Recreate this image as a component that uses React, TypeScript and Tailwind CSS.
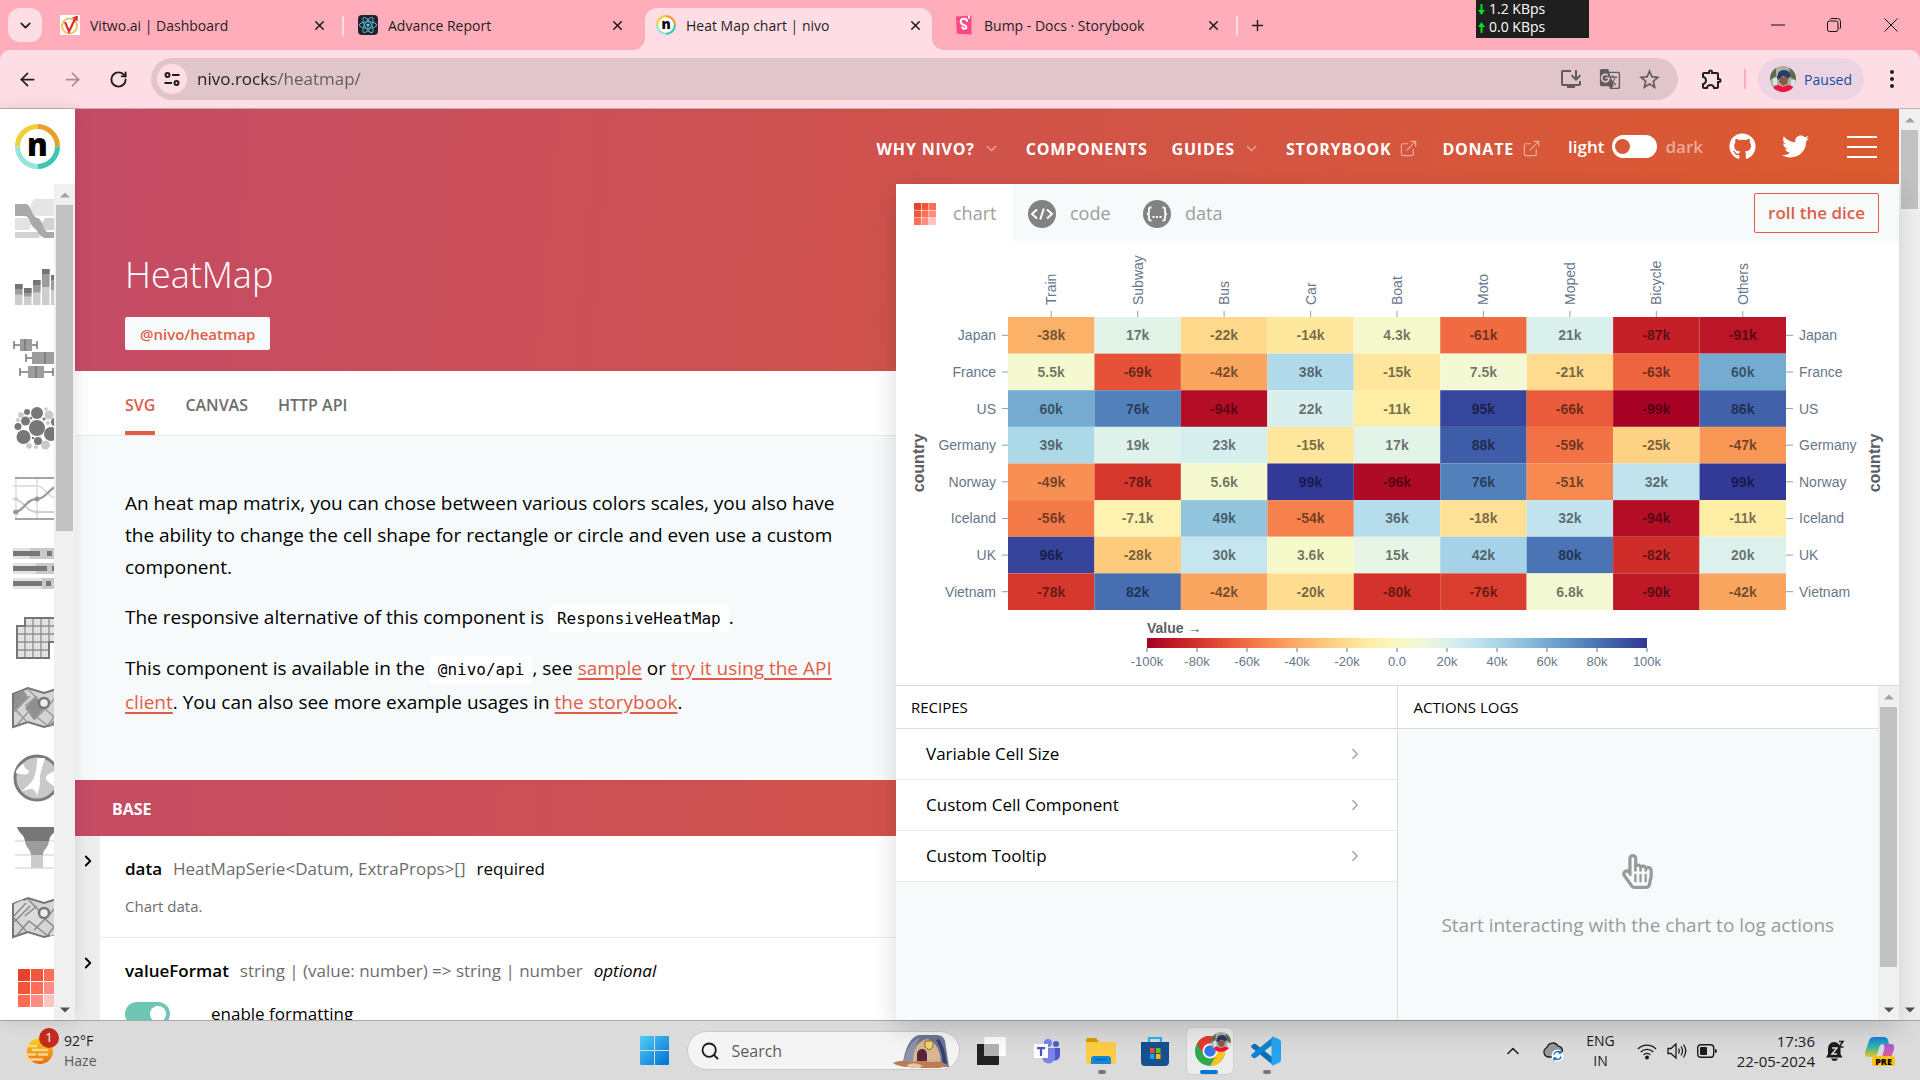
import { useState, type ReactNode } from "react";
import {
  ArrowLeft,
  ArrowRight,
  ChevronDown,
  ChevronRight,
  ChevronUp,
  Plus,
  RotateCw,
  Search,
  X,
} from "lucide-react";
import { FaGithub, FaReact, FaRegHandPointer, FaTwitter } from "react-icons/fa";
import { FiExternalLink } from "react-icons/fi";
import { MdGTranslate, MdInstallDesktop, MdOutlineExtension, MdStarBorder } from "react-icons/md";

const columns = ["Train", "Subway", "Bus", "Car", "Boat", "Moto", "Moped", "Bicycle", "Others"];

const series: { country: string; values: number[] }[] = [
  { country: "Japan", values: [-38, 17, -22, -14, 4.3, -61, 21, -87, -91] },
  { country: "France", values: [5.5, -69, -42, 38, -15, 7.5, -21, -63, 60] },
  { country: "US", values: [60, 76, -94, 22, -11, 95, -66, -99, 86] },
  { country: "Germany", values: [39, 19, 23, -15, 17, 88, -59, -25, -47] },
  { country: "Norway", values: [-49, -78, 5.6, 99, -96, 76, -51, 32, 99] },
  { country: "Iceland", values: [-56, -7.1, 49, -54, 36, -18, 32, -94, -11] },
  { country: "UK", values: [96, -28, 30, 3.6, 15, 42, 80, -82, 20] },
  { country: "Vietnam", values: [-78, 82, -42, -20, -80, -76, 6.8, -90, -42] },
];

const scheme = [
  [165, 0, 38],
  [215, 48, 39],
  [244, 109, 67],
  [253, 174, 97],
  [254, 224, 144],
  [255, 255, 191],
  [224, 243, 248],
  [171, 217, 233],
  [116, 173, 209],
  [69, 117, 180],
  [49, 54, 149],
];

// Cubic B-spline through the diverging scheme, t in 0..1.
function colorAt(t: number): string {
  const n = scheme.length - 1;
  const i = t >= 1 ? n - 1 : Math.floor(Math.max(0, t) * n);
  const u = t * n - i;
  const channel = (c: number) => {
    const v1 = scheme[i][c];
    const v2 = scheme[i + 1][c];
    const v0 = i > 0 ? scheme[i - 1][c] : 2 * v1 - v2;
    const v3 = i < n - 1 ? scheme[i + 2][c] : 2 * v2 - v1;
    const u2 = u * u;
    const u3 = u2 * u;
    const v =
      ((1 - 3 * u + 3 * u2 - u3) * v0 + (4 - 6 * u2 + 3 * u3) * v1 + (1 + 3 * u + 3 * u2 - 3 * u3) * v2 + u3 * v3) / 6;
    return Math.round(Math.min(255, Math.max(0, v)));
  };
  return `rgb(${channel(0)}, ${channel(1)}, ${channel(2)})`;
}

function HeatMapChart() {
  const left = 112;
  const top = 76;
  const width = 778;
  const height = 293;
  const cw = width / columns.length;
  const ch = height / series.length;
  const legendLeft = 251;
  const legendTicks = [-100, -80, -60, -40, -20, 0, 20, 40, 60, 80, 100];
  return (
    <svg viewBox="0 0 1003 444" className="block w-full" fontFamily="'Liberation Sans', Arial, sans-serif" role="img" aria-label="Heat map">
      <defs>
        <linearGradient id="legend">
          {Array.from({ length: 21 }, (_, i) => (
            <stop key={i} offset={i / 20} stopColor={colorAt(i / 20)} />
          ))}
        </linearGradient>
      </defs>
      {columns.map((c, i) => {
        const x = left + cw * (i + 0.5);
        return (
          <g key={c} fill="#67768a">
            <line x1={x} x2={x} y1={top - 6} y2={top} stroke="#8fa1ad" />
            <text transform={`translate(${x} ${top - 12}) rotate(-90)`} fontSize="14" dominantBaseline="central">
              {c}
            </text>
          </g>
        );
      })}
      {series.map((s, r) => {
        const y = top + ch * (r + 0.5);
        return (
          <g key={s.country}>
            <line x1={left - 6} x2={left} y1={y} y2={y} stroke="#8fa1ad" />
            <line x1={left + width} x2={left + width + 7} y1={y} y2={y} stroke="#8fa1ad" />
            <text x={left - 12} y={y} fontSize="14" fill="#67768a" textAnchor="end" dominantBaseline="central">
              {s.country}
            </text>
            <text x={left + width + 13} y={y} fontSize="14" fill="#67768a" dominantBaseline="central">
              {s.country}
            </text>
            {s.values.map((v, c) => (
              <g key={c}>
                <rect x={left + cw * c} y={top + ch * r} width={cw} height={ch} fill={colorAt((v + 100) / 200)} />
                <text
                  x={left + cw * (c + 0.5)}
                  y={y}
                  fontSize="14"
                  fontWeight="700"
                  fill="#000"
                  fillOpacity="0.54"
                  textAnchor="middle"
                  dominantBaseline="central"
                >
                  {v}k
                </text>
              </g>
            ))}
          </g>
        );
      })}
      <text transform="translate(22 222) rotate(-90)" fontSize="16" fontWeight="700" fill="#5c5f63" textAnchor="middle" dominantBaseline="central">
        country
      </text>
      <text transform="translate(978 222) rotate(-90)" fontSize="16" fontWeight="700" fill="#5c5f63" textAnchor="middle" dominantBaseline="central">
        country
      </text>
      <text x={legendLeft} y="387" fontSize="14" fontWeight="700" fill="#5c5f63" dominantBaseline="central">
        Value →
      </text>
      <rect x={legendLeft} y="397" width="500" height="10" fill="url(#legend)" />
      {legendTicks.map((t, i) => (
        <g key={t}>
          <line x1={legendLeft + i * 50} x2={legendLeft + i * 50} y1="407" y2="411" stroke="#667788" />
          <text x={legendLeft + i * 50} y="420" fontSize="13" fill="#67768a" textAnchor="middle" dominantBaseline="central">
            {t === 0 ? "0.0" : `${t}k`}
          </text>
        </g>
      ))}
    </svg>
  );
}

/* ---------- Browser chrome ---------- */

function NivoMark({ className }: { className: string }) {
  return (
    <svg viewBox="0 0 45 45" className={className} aria-hidden="true">
      <circle cx="22.5" cy="22.5" r="20" fill="#fff" />
      <g fill="none" strokeWidth="5">
        <path d="M2.500 22.500A20 20 0 0 1 22.500 2.500" stroke="#f1cf36" />
        <path d="M22.500 2.500A20 20 0 0 1 42.500 22.500" stroke="#e8a02c" />
        <path d="M42.500 22.500A20 20 0 0 1 22.500 42.500" stroke="#3dc8ad" />
        <path d="M22.500 42.500A20 20 0 0 1 2.500 22.500" stroke="#97e5d6" />
      </g>
      <text x="22.500" y="32" fontSize="31" fontWeight="800" textAnchor="middle" fontFamily="'Open Sans', sans-serif">
        n
      </text>
    </svg>
  );
}

function VitwoIcon() {
  return (
    <svg viewBox="0 0 20 20" className="size-5" aria-hidden="true">
      <rect width="20" height="20" fill="#fff" />
      <circle cx="9.500" cy="11" r="7.500" fill="none" stroke="#f0b545" strokeWidth="1.600" />
      <path d="M5 7l4 9.500L15 4" fill="none" stroke="#e0302c" strokeWidth="2.200" />
      <path d="M12 2.500L18 0.500l-.5 6z" fill="#e0302c" />
    </svg>
  );
}

function StorybookIcon() {
  return (
    <svg viewBox="0 0 20 20" className="size-5" aria-hidden="true">
      <path d="M2 1.500L17.500.5v19L2.800 18.800z" fill="#ff4785" />
      <path d="M14 .5l-.1 3.500 1.100-.8 1 .8V.4z" fill="#fff" />
      <path d="M13.200 6.800c0-2-1.300-3-3.200-3S6.700 5 6.700 6.800c0 3.800 5.600 2.700 5.600 5.300 0 1-.7 1.600-2 1.600-1.500 0-2-.8-2-2.200" fill="none" stroke="#fff" strokeWidth="2" />
    </svg>
  );
}

function ReactIcon() {
  return (
    <span className="flex size-5 items-center justify-center rounded-sm bg-[#20232a] text-[#5fd3f3]">
      <FaReact size={18} />
    </span>
  );
}

const tabs: { title: string; icon: ReactNode; active?: boolean; divider?: boolean }[] = [
  { title: "Vitwo.ai | Dashboard", icon: <VitwoIcon />, divider: true },
  { title: "Advance Report", icon: <ReactIcon /> },
  { title: "Heat Map chart | nivo", icon: <NivoMark className="size-5" />, active: true },
  { title: "Bump - Docs · Storybook", icon: <StorybookIcon />, divider: true },
];

function SpeedArrow({ dir }: { dir: "up" | "down" }) {
  return (
    <svg viewBox="0 0 7 11" className="h-[11px] w-[7px]" fill="#00e413" aria-hidden="true">
      <path d={dir === "down" ? "M2.500 0h2v6H7l-3.500 5L0 6h2.500z" : "M2.500 11h2V5H7L3.500 0 0 5h2.500z"} />
    </svg>
  );
}

function TabStrip() {
  return (
    <div className="relative flex h-[50px] items-end bg-[#ffacbb] text-[#1f1f1f]">
      <button aria-label="Search tabs" className="mb-2 ml-2 flex size-[34px] shrink-0 items-center justify-center rounded-xl bg-[#ffdde4]">
        <ChevronDown size={17} strokeWidth={2.500} />
      </button>
      <div role="tablist" className="ml-1 flex h-[42px] items-center">
        {tabs.map((t) => (
          <div
            key={t.title}
            role="tab"
            aria-selected={!!t.active}
            className="relative flex h-full w-[298px] items-center pr-3.5 pb-2 pl-3.5"
          >
            {t.active && (
              <span className="absolute inset-y-0 right-2 left-[3px] rounded-t-xl bg-[#ffdde4]">
                <span className="absolute bottom-0 -left-3 size-3 bg-[radial-gradient(circle_at_0_0,transparent_12px,#ffdde4_12px)]" />
                <span className="absolute -right-3 bottom-0 size-3 bg-[radial-gradient(circle_at_100%_0,transparent_12px,#ffdde4_12px)]" />
              </span>
            )}
            <span className="relative">{t.icon}</span>
            <span className="relative ml-2.5 flex-1 truncate text-[14px]">{t.title}</span>
            <button aria-label={`Close ${t.title}`} className="relative mr-px p-0.5">
              <X size={15} strokeWidth={2.500} />
            </button>
            {t.divider && <span className="absolute right-0 top-2 h-5 w-0.5 rounded bg-[#ffdde4]" />}
          </div>
        ))}
        <button aria-label="New tab" className="mb-2 ml-[7px] p-1">
          <Plus size={17} strokeWidth={2} />
        </button>
      </div>
      <div className="absolute top-0 right-[331px] h-[38px] w-[113px] bg-[#1f1f1f] pl-0.5 text-[14px] leading-[18px] text-white">
        <p className="flex items-center gap-1">
          <SpeedArrow dir="down" />
          1.2 KBps
        </p>
        <p className="flex items-center gap-1">
          <SpeedArrow dir="up" />
          0.0 KBps
        </p>
      </div>
      <div className="ml-auto flex h-full items-center">
        <button aria-label="Minimize" className="flex h-full w-14 items-center justify-center">
          <svg viewBox="0 0 14 14" className="size-3.5" aria-hidden="true">
            <path d="M0 7h14" stroke="#111" />
          </svg>
        </button>
        <button aria-label="Restore" className="flex h-full w-14 items-center justify-center">
          <svg viewBox="0 0 14 14" className="size-3.5" fill="none" stroke="#111" aria-hidden="true">
            <rect x=".5" y="3" width="10.500" height="10.500" rx="2" />
            <path d="M3 1.500Q3.500.5 5 .5h5.500a3 3 0 0 1 3 3V9q0 1.500-1 2" />
          </svg>
        </button>
        <button aria-label="Close" className="flex h-full w-[58px] items-center justify-center">
          <svg viewBox="0 0 14 14" className="size-3.5" stroke="#111" aria-hidden="true">
            <path d="M.5.5l13 13M13.500.5l-13 13" />
          </svg>
        </button>
      </div>
    </div>
  );
}

function Toolbar() {
  return (
    <div className="bg-[#ffacbb]">
      <div className="flex h-[59px] items-center rounded-t-[10px] border-b border-[#bfb0b4] bg-[#ffdde4] text-[#1f1f1f]">
        <button aria-label="Back" className="ml-[17px]">
          <ArrowLeft size={21} />
        </button>
        <button aria-label="Forward" className="ml-6 text-[#a78f95]">
          <ArrowRight size={21} />
        </button>
        <button aria-label="Reload" className="ml-[26px]">
          <RotateCw size={19} strokeWidth={2.400} />
        </button>
        <div className="ml-[23px] flex h-[42px] flex-1 items-center rounded-full bg-[#e0c5ca] pr-4 pl-1.5 text-[#5f5b5f]">
          <button aria-label="Site information" className="flex size-[30px] items-center justify-center rounded-full bg-[#ffdde4]">
            <svg viewBox="0 0 16 16" className="size-4" fill="none" stroke="#1f1f1f" strokeWidth="2" aria-hidden="true">
              <circle cx="3.500" cy="4" r="2" />
              <path d="M8 4h7.500M.5 12H8" />
              <circle cx="12.500" cy="12" r="2" />
            </svg>
          </button>
          <input
            aria-label="Address"
            defaultValue="nivo.rocks/heatmap/"
            className="ml-2.5 flex-1 bg-[linear-gradient(90deg,#1f1f1f_77px,#5f5b5f_77px)] bg-clip-text text-[17px] text-transparent caret-black outline-none"
          />
          <button aria-label="Install" className="ml-4">
            <MdInstallDesktop size={24} />
          </button>
          <button aria-label="Translate" className="ml-4">
            <MdGTranslate size={22} />
          </button>
          <button aria-label="Bookmark" className="ml-4">
            <MdStarBorder size={25} />
          </button>
        </div>
        <button aria-label="Extensions" className="ml-[22px]">
          <MdOutlineExtension size={24} />
        </button>
        <span className="ml-5 h-5 w-0.5 bg-[#ffacbb]" />
        <button className="ml-3 flex h-[42px] items-center gap-2 rounded-full bg-[#ecd4e2] pr-3 pl-3 text-[14px] text-[#174ea6]">
          <Avatar className="size-[26px]" />
          Paused
        </button>
        <button aria-label="Menu" className="mr-[22px] ml-[22px]">
          <svg viewBox="0 0 12 20" className="h-5 w-3" fill="#1f1f1f" aria-hidden="true">
            <circle cx="6" cy="3" r="2" />
            <circle cx="6" cy="10" r="2" />
            <circle cx="6" cy="17" r="2" />
          </svg>
        </button>
      </div>
    </div>
  );
}

function Avatar({ className }: { className: string }) {
  return (
    <svg viewBox="0 0 26 26" className={className} aria-hidden="true">
      <clipPath id="face">
        <circle cx="13" cy="13" r="13" />
      </clipPath>
      <g clipPath="url(#face)">
        <rect width="26" height="26" fill="#a9b3a0" />
        <path d="M0 4l6-4v10l-6 4zM19 2l7 3v9l-5-2z" fill="#5c6b52" />
        <path d="M3 12h4v7H3zM21 14h4v6h-4z" fill="#dfe3e6" />
        <path d="M10 11h9l-2 7-4 2-4-4z" fill="#8c5a45" />
        <path d="M7 11q1-7 7-7t7 6l-2 2-6-2-5 4z" fill="#2b3c66" />
        <path d="M2 26q0-6 6-7l5 2 5-2q7 1 8 7z" fill="#f5103f" />
      </g>
    </svg>
  );
}

/* ---------- Site sidebar ---------- */

const heatShades = ["#e8432a", "#f2553c", "#ff6d54", "#f2553c", "#ff6d54", "#ff8c80", "#ff6d54", "#ff8c80", "#ffc5c5"];

function HeatIcon({ className }: { className: string }) {
  return (
    <svg viewBox="0 0 38 38" className={className} aria-hidden="true">
      {heatShades.map((c, i) => (
        <rect key={i} x={(i % 3) * 13} y={Math.floor(i / 3) * 13} width="12" height="12" fill={c} />
      ))}
    </svg>
  );
}

function MapIcon({ light }: { light?: boolean }) {
  const dark = light ? "#dcdcdc" : "#8f8f8f";
  const stroke = light ? "#8a8a8a" : "#9a9a9a";
  return (
    <>
      <path d="M1 10L16 4l16 5 16-5v35l-16 4-16-5L1 43z" fill="#d5d5d5" stroke="#767676" strokeWidth="2" />
      <path d="M2 10l9-4 5 7L2 27zM13 24L24 12l8 12-10 12zM38 40l10-9v8l-10 3z" fill={dark} />
      <path d="M2 22L14 9M2 28L18 12M16 5l16 17M48 8L38 20M2 24l13 14M5 41l12-14 18 14M13 22L25 12M22 36l11-11 14 12M48 25L36 41" fill="none" stroke={stroke} strokeWidth="1.500" />
      <circle cx="32" cy="19" r="5" fill="#eee" stroke="#767676" strokeWidth="2.500" />
    </>
  );
}

const chartIcons: { name: string; art: ReactNode }[] = [
  {
    name: "AreaBump",
    art: (
      <>
        <path d="M17 22Q19 5 23 5H50V22z" fill="#e5e5e5" />
        <path d="M3 24h14q5 4 0 12H3z" fill="#e3e3e3" />
        <path d="M3 38h22l8-14h17v12H34l-8 8H3z" fill="#d2d2d2" />
        <path d="M3 10h11c5 0 6 14 12 14 5 2 5 14 10 14h14v6H34c-6 0-8-8-12-10-4-3-4-12-9-12H3z" fill="#a9a9a9" />
      </>
    ),
  },
  {
    name: "Bar",
    art: [20, 24, 16, 5, 11].map((y, i) => (
      <g key={i}>
        <rect x={3 + i * 9} y={y} width="7.500" height={41 - y} fill="#cdcdcd" />
        <rect x={3 + i * 9} y={y} width="7.500" height={(41 - y) * 0.5} fill="#9c9c9c" />
        <rect x={3 + i * 9} y={y} width="7.500" height="5" fill="#757575" />
      </g>
    )),
  },
  {
    name: "BoxPlot",
    art: (
      <g stroke="#777" strokeWidth="1.500">
        <path d="M2 11h23M2 7v8M25 7v8M14 24h34M14 20v8M8 38h33M8 34v8M41 34v8" />
        <path d="M8 5h12v12H8zM20 18h24v12H20zM16 32h16v12H16z" fill="#9d9d9d" stroke="none" />
        <path d="M13 5v12M33 18v12M24 32v12" />
      </g>
    ),
  },
  {
    name: "CirclePacking",
    art: (
      <>
        <g fill="#777">
          <circle cx="25" cy="24" r="8" />
          <circle cx="25" cy="9" r="6" />
          <circle cx="11.500" cy="33" r="7" />
          <circle cx="39" cy="30" r="7" />
          <circle cx="13.500" cy="17" r="4.500" />
          <circle cx="6" cy="22.500" r="3.500" />
          <circle cx="15" cy="8" r="3" />
          <circle cx="26" cy="37" r="4" />
          <circle cx="43" cy="18" r="4" />
          <circle cx="32" cy="15" r="1.500" />
          <circle cx="19" cy="14" r="1.300" />
          <circle cx="21" cy="34" r="1.300" />
        </g>
        <g fill="#c9c9c9">
          <circle cx="37" cy="11" r="4.500" />
          <circle cx="33.500" cy="41" r="4.500" />
          <circle cx="9" cy="11" r="2.800" />
          <circle cx="6" cy="16" r="2" />
          <circle cx="17" cy="42" r="2.800" />
          <circle cx="24" cy="43" r="2" />
          <circle cx="34" cy="5" r="1.800" />
          <circle cx="36" cy="19" r="2" />
        </g>
      </>
    ),
  },
  {
    name: "Bump",
    art: (
      <g fill="none">
        <path d="M4 4v41M25 4v41" stroke="#ddd" strokeWidth="1.500" />
        <path d="M1 12h24c9 0 10 13 23 13" stroke="#e0e0e0" strokeWidth="2" />
        <path d="M1 25c11 0 12 13 24 13h23" stroke="#cfcfcf" strokeWidth="2" />
        <path d="M1 38c12 0 12-13 24-13 10 0 12-13 23-13" stroke="#999" strokeWidth="2.200" />
        <path d="M3 4h45M3 45h45" stroke="#888" strokeWidth="1.600" />
        <g fill="#999">
          <circle cx="4" cy="38" r="2.500" />
          <circle cx="25" cy="25" r="2.500" />
          <circle cx="4" cy="25" r="2" fill="#cfcfcf" />
          <circle cx="25" cy="38" r="2" fill="#cfcfcf" />
        </g>
      </g>
    ),
  },
  {
    name: "Bullet",
    art: [4, 19, 34].map((y, i) => (
      <g key={y}>
        <rect x="1" y={y} width="48" height="11" fill="#e2e2e2" />
        <rect x={18 + i * 6} y={y} width="32" height="11" fill="#c9c9c9" />
        <rect x="1" y={y + 3} width={[27, 34, 29][i]} height="5" fill="#777" />
        <rect x={[35, 40, 34][i]} y={y + 3} width="5" height="5" fill="#777" />
      </g>
    )),
  },
  {
    name: "Calendar",
    art: (
      <>
        <path d="M5 12h8V4h32v24h-8v16H5z" fill="#e2e2e2" />
        <path d="M5 20h40M5 28h32M5 36h32M13 12h32M13 12v32M21 4v40M29 4v40M37 4v24" stroke="#8e8e8e" strokeWidth="1.300" />
        <path d="M5 12h8V4h32v24h-8v16H5z" fill="none" stroke="#777" strokeWidth="2" />
      </>
    ),
  },
  { name: "Choropleth", art: <MapIcon /> },
  {
    name: "Chord",
    art: (
      <>
        <circle cx="25" cy="24" r="22" fill="#c9c9c9" stroke="#7b7b7b" strokeWidth="3" />
        <path d="M25 4h8c-3 10-6 18-5 24 0 6-2 9-3 14-2-5-2-7-6-7-4 0-8 2-10 3 5-5 11-9 13-14 2-6 3-12 3-20z" fill="#fff" />
        <path d="M4 17c3-4 5-7 8-7 0 6 5 5 5 8-1 4-9 2-13 1zM46 16c-6 2-12 4-12 8s6 6 10 10z" fill="#fff" />
      </>
    ),
  },
  {
    name: "Funnel",
    art: (
      <>
        <path d="M3 17h44M3 31h44M3 44h44" stroke="#dedede" strokeWidth="1.500" />
        <path d="M5 3h40c-2 7-7 7-8 14H13C12 10 7 10 5 3z" fill="#777" />
        <path d="M13 17h24c-1 8-6 8-6 14H19c0-6-5-6-6-14z" fill="#9c9c9c" />
        <path d="M19 31h12v13H19z" fill="#cbcbcb" />
      </>
    ),
  },
  { name: "GeoMap", art: <MapIcon light /> },
];

function Arrow({ dir, dim }: { dir: "up" | "down"; dim?: boolean }) {
  return (
    <svg viewBox="0 0 10 6" className="h-1.5 w-2.5" fill={dim ? "#a3a3a3" : "#505050"} aria-hidden="true">
      <path d={dir === "up" ? "M0 5.500L5 .5l5 5z" : "M0 .5h10l-5 5z"} />
    </svg>
  );
}

function ScrollRail({ thumb }: { thumb: string }) {
  return (
    <div className="flex w-[21px] shrink-0 flex-col items-center bg-[#f0f0f0]">
      <span className="flex h-[21px] shrink-0 items-center">
        <Arrow dir="up" dim />
      </span>
      <span className="flex w-full flex-1 justify-center">
        <span className={`w-[17px] bg-[#c1c1c1] ${thumb}`} />
      </span>
      <span className="flex h-[21px] shrink-0 items-center">
        <Arrow dir="down" />
      </span>
    </div>
  );
}

function Sidebar() {
  return (
    <aside className="z-10 flex w-[75px] shrink-0 flex-col bg-white shadow-[0_0_16px_rgba(0,0,0,0.12)]">
      <a href="#home" aria-label="nivo home" className="flex h-[75px] shrink-0 items-center justify-center">
        <NivoMark className="size-[45px]" />
      </a>
      <div className="flex min-h-0 flex-1">
        <nav aria-label="Charts" className="min-w-0 flex-1 overflow-hidden">
          {chartIcons.map((icon) => (
            <a key={icon.name} href={`#${icon.name}`} aria-label={icon.name} className="flex h-[70px] items-center pl-3">
              <svg viewBox="0 0 50 50" className="size-[50px] shrink-0" aria-hidden="true">
                {icon.art}
              </svg>
            </a>
          ))}
          <a href="#HeatMap" aria-label="HeatMap" className="flex h-[68px] items-center pl-[18px]">
            <HeatIcon className="size-[38px] shrink-0" />
          </a>
        </nav>
        <ScrollRail thumb="h-[41%]" />
      </div>
    </aside>
  );
}

/* ---------- Site content ---------- */

function NavBar() {
  return (
    <header className="flex h-[75px] shrink-0 items-center justify-end pr-[22px] text-white">
      <nav className="flex items-center pt-1 text-[16px] font-bold tracking-wider">
        <button className="flex items-center">
          WHY NIVO?
          <ChevronDown size={17} strokeWidth={1.500} className="ml-2 opacity-60" />
        </button>
        <a href="#components" className="ml-[26px]">COMPONENTS</a>
        <button className="ml-6 flex items-center">
          GUIDES
          <ChevronDown size={17} strokeWidth={1.500} className="ml-2 opacity-60" />
        </button>
        <a href="#storybook" className="ml-[26px] flex items-center">
          STORYBOOK
          <FiExternalLink size={19} strokeWidth={1.500} className="ml-2 opacity-50" />
        </a>
        <a href="#donate" className="ml-6 flex items-center">
          DONATE
          <FiExternalLink size={19} strokeWidth={1.500} className="ml-2 opacity-50" />
        </a>
      </nav>
      <label className="ml-[27px] flex items-center gap-2 text-[17px] font-semibold">
        light
        <input
          type="checkbox"
          className="relative h-[23px] w-[45px] appearance-none rounded-full bg-white before:absolute before:top-1 before:left-[3px] before:size-[15px] before:rounded-full before:bg-[#d9583a] checked:before:left-[27px]"
        />
        <span className="opacity-50">dark</span>
      </label>
      <a href="#github" aria-label="GitHub" className="ml-[26px]">
        <FaGithub size={27} />
      </a>
      <a href="#twitter" aria-label="Twitter" className="ml-[26px]">
        <FaTwitter size={27} />
      </a>
      <button aria-label="Open menu" className="ml-[38px] flex flex-col gap-2">
        <span className="h-0.5 w-[30px] bg-white" />
        <span className="h-0.5 w-[30px] bg-white" />
        <span className="h-0.5 w-[30px] bg-white" />
      </button>
    </header>
  );
}

const linkClass = "text-[#e25d47] underline decoration-2 underline-offset-3";

function Code({ children }: { children: ReactNode }) {
  return <code className="rounded-xs bg-white px-2 py-1 font-['DejaVu_Sans_Mono',monospace] text-[16px] leading-none">{children}</code>;
}

function Description() {
  return (
    <section className="flex h-[344px] shrink-0 flex-col gap-[18px] bg-[#f6fafb] pr-[40px] pl-[50px] pt-[51px] text-[19px] leading-8 text-black">
      <p>
        An heat map matrix, you can chose between various colors scales, you also have the ability to change the cell
        shape for rectangle or circle and even use a custom component.
      </p>
      <p>
        The responsive alternative of this component is <Code>ResponsiveHeatMap</Code>.
      </p>
      <p className="leading-[34px]">
        This component is available in the <Code>@nivo/api</Code>, see{" "}
        <a href="#sample" className={linkClass}>sample</a> or{" "}
        <a href="#api" className={linkClass}>try it using the API client</a>. You can also see more example usages in{" "}
        <a href="#stories" className={linkClass}>the storybook</a>.
      </p>
    </section>
  );
}

function PropRow({ name, type, flag, children }: { name: string; type: string; flag: ReactNode; children: ReactNode }) {
  return (
    <div className="flex shrink-0">
      <button aria-label={`Expand ${name}`} className="flex w-[25px] shrink-0 items-start justify-center bg-[#ededed] pt-4">
        <ChevronRight size={18} strokeWidth={2.500} />
      </button>
      <div className="flex-1 border-b border-[#e9e9e9] bg-white px-[25px] pt-4 pb-4">
        <h3 className="flex gap-[11px] text-[17px] leading-[34px]">
          <span className="font-semibold">{name}</span>
          <span className="text-[#6d6d6d]">{type}</span>
          {flag}
        </h3>
        {children}
      </div>
    </div>
  );
}

function LeftColumn() {
  const [enabled, setEnabled] = useState(true);
  return (
    <div className="flex min-w-0 flex-[821] flex-col overflow-hidden">
      <div className="flex h-[187px] shrink-0 flex-col items-start px-[50px] pt-[64px]">
        <h1 className="text-[36px] leading-[54px] font-light text-white">HeatMap</h1>
        <a href="#package" className="mt-[15px] flex h-[33px] items-center rounded-xs bg-[#f6fafb] px-[15px] pt-0.5 text-[15px] font-semibold text-[#e25d47]">
          @nivo/heatmap
        </a>
      </div>
      <nav className="flex h-[65px] shrink-0 items-stretch gap-[30px] border-b border-[#e9e9e9] bg-white px-[50px] text-[16px] font-semibold text-[#6d6d6d]">
        <a href="#svg" className="flex items-center border-b-4 border-[#e25d47] pt-2 text-[#e25d47]">SVG</a>
        <a href="#canvas" className="flex items-center pt-1">CANVAS</a>
        <a href="#http" className="flex items-center pt-1">HTTP API</a>
      </nav>
      <Description />
      <h2 className="flex h-14 shrink-0 items-center px-[37px] pt-0.5 text-[16px] font-bold text-white">BASE</h2>
      <PropRow name="data" type="HeatMapSerie<Datum, ExtraProps>[]" flag={<span>required</span>}>
        <p className="mt-1.5 text-[15px] leading-[29px] text-[#6d6d6d]">Chart data.</p>
      </PropRow>
      <PropRow name="valueFormat" type="string | (value: number) => string | number" flag={<em>optional</em>}>
        <label className="mt-3.5 flex items-center gap-[41px] text-[17px] leading-6">
          <input
            type="checkbox"
            checked={enabled}
            onChange={(e) => setEnabled(e.target.checked)}
            className="relative h-6 w-[45px] appearance-none rounded-full bg-[#c4c4c4] before:absolute before:top-1 before:left-1 before:size-4 before:rounded-full before:bg-white checked:bg-[#6ec6b5] checked:before:left-[25px]"
          />
          enable formatting
        </label>
      </PropRow>
    </div>
  );
}

const recipes = ["Variable Cell Size", "Custom Cell Component", "Custom Tooltip"];

function RightColumn() {
  return (
    <div className="z-10 flex min-w-0 flex-[1003] flex-col bg-white shadow-[0_9px_24px_rgba(0,0,0,0.15)]">
      <div className="flex h-[57px] shrink-0 items-stretch bg-[#f6fafb] text-[18px] text-[#9e9e9e]">
        <button className="flex w-[117px] items-center gap-[17px] bg-white pt-0.5 pl-[18px]">
          <HeatIcon className="size-[22px]" />
          chart
        </button>
        <button className="flex w-[116px] items-center gap-3.5 pt-0.5 pl-[15px]">
          <svg viewBox="0 0 28 28" className="size-7" aria-hidden="true">
            <circle cx="14" cy="14" r="14" fill="#828282" />
            <path d="M9 9.500L4 14l5 4.500M19 9.500l5 4.500-5 4.500M15.800 8.500L12.200 19.500" fill="none" stroke="#fff" strokeWidth="2" />
          </svg>
          code
        </button>
        <button className="flex items-center gap-3.5 pt-0.5 pl-3.5">
          <svg viewBox="0 0 28 28" className="size-7" aria-hidden="true">
            <circle cx="14" cy="14" r="14" fill="#828282" />
            <path d="M8.500 7.500H7.500q-1.500 0-1.500 1.500v3q0 2-2 2 2 0 2 2v3q0 1.500 1.500 1.500h1M19.500 7.500h1q1.500 0 1.500 1.500v3q0 2 2 2-2 0-2 2v3q0 1.500-1.500 1.500h-1" fill="none" stroke="#fff" strokeWidth="1.800" />
            <path d="M9.500 16h2v2h-2zM13 16h2v2h-2zM16.500 16h2v2h-2z" fill="#fff" />
          </svg>
          data
        </button>
        <button className="mt-[9px] mr-5 ml-auto h-10 rounded-xs border border-[#e25d47] px-[13px] text-[17px] font-semibold text-[#e25d47]">
          roll the dice
        </button>
      </div>
      <HeatMapChart />
      <div className="flex min-h-0 flex-1 border-t border-[#dcdcdc] bg-[#f6fafb]">
        <section className="w-1/2 border-r border-[#dcdcdc]">
          <h2 className="h-[43px] border-b border-[#dcdcdc] bg-white pl-[15px] text-[15px] leading-[42px] font-medium">RECIPES</h2>
          {recipes.map((r) => (
            <a key={r} href="#recipe" className="flex h-[51px] items-center justify-between border-b border-[#ebebeb] bg-white pr-[33px] pl-[30px] text-[17px] font-medium">
              {r}
              <ChevronRight size={18} strokeWidth={1.500} className="text-[#999]" />
            </a>
          ))}
        </section>
        <section className="flex flex-1 flex-col">
          <h2 className="h-[43px] border-b border-[#dcdcdc] bg-white pl-4 text-[15px] leading-[42px] font-medium">ACTIONS LOGS</h2>
          <div className="flex flex-1 flex-col items-center justify-center gap-[22px] pt-11 text-[19px] text-[#9a9a9a]">
            <FaRegHandPointer size={35} />
            <p>Start interacting with the chart to log actions</p>
          </div>
        </section>
        <ScrollRail thumb="h-[89%]" />
      </div>
    </div>
  );
}

/* ---------- Taskbar ---------- */

function TaskbarIcons() {
  return (
    <>
      <button aria-label="Task view" className="ml-4">
        <svg viewBox="0 0 30 30" className="size-[30px]" aria-hidden="true">
          <path d="M9 1h20a1 1 0 0 1 1 1v18H9z" fill="#f7f7f7" />
          <path d="M1 8h22v20a1 1 0 0 1-1 1H1z" fill="#222" />
          <path d="M8 1h21v19H8z" fill="#fff" fillOpacity=".65" />
        </svg>
      </button>
      <button aria-label="Teams" className="ml-[27px]">
        <svg viewBox="0 0 28 26" className="h-[26px] w-7" aria-hidden="true">
          <circle cx="15" cy="5" r="4" fill="#7b83eb" />
          <circle cx="23" cy="6" r="3" fill="#5059c9" />
          <path d="M19 10h8v8a5 5 0 0 1-7 4z" fill="#5059c9" />
          <path d="M9 10h13v9a6.500 6.500 0 0 1-13 0z" fill="#7b83eb" />
          <path d="M1 6h14v14H1z" fill="#fff" />
          <path d="M4 9h8v2.200H9.100V18H6.900v-6.800H4z" fill="#4b53bc" />
        </svg>
      </button>
      <button aria-label="File Explorer" className="relative ml-[25px] flex h-full items-center">
        <svg viewBox="0 0 30 28" className="h-7 w-[30px]" aria-hidden="true">
          <path d="M0 3q0-2 2-2h8l3 4H0z" fill="#d99a00" />
          <path d="M0 5h28q2 0 2 2v18q0 2-2 2H2q-2 0-2-2z" fill="#ffcd43" />
          <path d="M5 27v-5q0-3 3-3h14q3 0 3 3v5z" fill="#1588d8" />
          <path d="M9 22.500h12" stroke="#0d5ea8" strokeWidth="1.500" />
        </svg>
        <span className="absolute bottom-1.5 left-3 h-1 w-2 rounded-full bg-[#777]" />
      </button>
      <button aria-label="Store" className="ml-6">
        <svg viewBox="0 0 30 30" className="size-[30px]" aria-hidden="true">
          <path d="M9 7V2h12v5" fill="none" stroke="#28b1ec" strokeWidth="2.200" />
          <path d="M1 6h28v20q0 4-4 4H5q-4 0-4-4z" fill="#15508f" />
          <path d="M10 12h4.500v5H10z" fill="#f25022" />
          <path d="M16 12h4.500v5H16z" fill="#7fba00" />
          <path d="M10 18h4.500v5H10z" fill="#00a4ef" />
          <path d="M16 18h4.500v5H16z" fill="#ffb900" />
        </svg>
      </button>
      <button aria-label="Chrome" className="relative ml-4 flex h-12 w-12 items-center rounded-md border border-[#cfcfcf] bg-[#ececec] pl-2">
        <svg viewBox="0 0 30 30" className="size-[30px]" aria-hidden="true">
          <circle cx="15" cy="15" r="15" fill="#2da94f" />
          <path d="M28 7.500A15 15 0 0 1 15 30l6.500-11.500L15 7.500z" fill="#fcc31e" />
          <path d="M2 7.500A15 15 0 0 1 28 7.500H15L8.500 18.500z" fill="#e33b2e" />
          <circle cx="15" cy="15" r="7.500" fill="#fff" />
          <circle cx="15" cy="15" r="5.800" fill="#3277e8" />
        </svg>
        <span className="absolute top-1 right-0.5">
          <Avatar className="size-5" />
        </span>
        <span className="absolute bottom-0 left-[13px] h-1 w-[18px] rounded-full bg-[#0078d4]" />
      </button>
      <button aria-label="Visual Studio Code" className="relative ml-[17px] flex h-full items-center">
        <svg viewBox="0 0 30 30" className="size-[30px]" aria-hidden="true">
          <path d="M0 10l2.500-2q1-.7 2 0L22 21.500V29L1 12q-1-1-1-2z" fill="#0a6fb8" />
          <path d="M0 20l2.500 2q1 .7 2 0L22 8.500V1L1 18q-1 1-1 2z" fill="#0f83cf" />
          <path d="M22 .5l6.500 3Q30 4.200 30 6v18q0 1.800-1.500 2.500L22 29.500q-1.500 0-1.500-2V2.500Q20.500.5 22 .5z" fill="#27a3ee" />
        </svg>
        <span className="absolute bottom-1.5 left-3 h-1 w-2 rounded-full bg-[#777]" />
      </button>
    </>
  );
}

function Taskbar() {
  return (
    <footer className="flex h-[60px] shrink-0 items-center border-t border-[#a9a9a9] bg-[#dbdbdb] text-[14px] text-[#1b1b1b]">
      <div className="flex flex-[640] items-center">
        <button className="ml-[25px] flex items-center gap-[9px] text-left">
          <span className="relative block">
            <svg viewBox="0 0 30 30" className="size-[30px]" aria-hidden="true">
              <defs>
                <linearGradient id="sun" x2="0" y2="1">
                  <stop stopColor="#ffd21f" />
                  <stop offset="1" stopColor="#ea6a10" />
                </linearGradient>
              </defs>
              <circle cx="15" cy="15" r="13" fill="url(#sun)" />
              <path d="M2 10h9M8 14h14M0 18.500h10M14 18.500h8M1 23.500h16" stroke="#f6d98c" strokeWidth="2.500" strokeLinecap="round" />
            </svg>
            <span className="absolute -top-2 -right-1 flex size-5 items-center justify-center rounded-full bg-[#c42b1c] text-[13px] text-white">1</span>
          </span>
          <span className="block leading-5">
            92°F
            <span className="block text-[#5a5a5a]">Haze</span>
          </span>
        </button>
      </div>
      <div className="flex h-full items-center">
        <button aria-label="Start">
          <svg viewBox="0 0 29 29" className="size-[29px]" aria-hidden="true">
            <defs>
              <linearGradient id="win" x2="1" y2="1">
                <stop stopColor="#52cdf8" />
                <stop offset="1" stopColor="#0070d0" />
              </linearGradient>
            </defs>
            <path d="M0 1q0-1 1-1h13v14H0zM15 0h13q1 0 1 1v13H15zM0 15h14v14H1q-1 0-1-1zM15 15h14v13q0 1-1 1H15z" fill="url(#win)" />
          </svg>
        </button>
        <label className="ml-[18px] flex h-[39px] w-[273px] items-center rounded-full border border-[#c9c9c9] bg-[#f4f4f4] pr-2 pl-3">
          <Search size={20} strokeWidth={2.200} />
          <input aria-label="Search" placeholder="Search" className="ml-3 min-w-0 flex-1 bg-transparent text-[16px] outline-none placeholder:text-[#5d5d5d]" />
          <svg viewBox="0 0 58 34" className="h-[34px] w-[58px] shrink-0" aria-hidden="true">
            <path d="M10 28Q14 4 26 1h18q6 0 8 6l4 26H18z" fill="#6f7590" />
            <path d="M10 28Q15 8 27 3q-6 10-6 26z" fill="#8d93a8" />
            <path d="M20 29Q20 8 34 5q13 4 14 24z" fill="#d8b692" />
            <path d="M46 5q6 8 8 26h-4q-1-16-7-25z" fill="#34407a" />
            <path d="M24 27v-7q1-5 5-5t5 5v7z" fill="#5a2438" />
            <path d="M32 7h8v6l-4 3-4-3z" fill="#f3d36d" stroke="#8a6a38" />
            <path d="M0 29q8-4 18-1 10-2 20 0 12-2 17 4l-9 2H28q-8-3-14-1Q4 32 0 29z" fill="#bd7b55" />
            <path d="M14 31q8-4 16 1l-4 2H16z" fill="#e9c3a3" />
          </svg>
        </label>
        <TaskbarIcons />
      </div>
      <div className="flex flex-[640] items-center justify-end">
        <button aria-label="Hidden icons">
          <ChevronUp size={20} strokeWidth={1.800} />
        </button>
        <svg viewBox="0 0 22 22" className="ml-[19px] size-[22px]" aria-hidden="true">
          <path d="M6 17a5 5 0 0 1-1-9.500A6 6 0 0 1 16 6q4.500 1 4.500 5t-3 6z" fill="#999" stroke="#222" strokeWidth="1.300" />
          <circle cx="15.500" cy="15.500" r="6" fill="#fff" />
          <path d="M11.800 14.500a4 4 0 0 1 7-1.500M19.200 16.500a4 4 0 0 1-7 1.500M19 10.500V13.200h-2.500M12 20.500V17.800h2.500" fill="none" stroke="#0f6cbd" strokeWidth="1.300" />
        </svg>
        <span className="ml-[22px] text-center leading-5">
          ENG
          <br />
          IN
        </span>
        <svg viewBox="0 0 20 18" className="ml-[22px] h-[18px] w-5" fill="none" stroke="#1b1b1b" strokeWidth="1.400" aria-hidden="true">
          <path d="M1 7a12.500 12.500 0 0 1 18 0M3.800 10a8.600 8.600 0 0 1 12.400 0M6.600 12.800a4.800 4.800 0 0 1 6.800 0" />
          <circle cx="10" cy="15.500" r="1.300" fill="#1b1b1b" />
        </svg>
        <svg viewBox="0 0 20 18" className="ml-2.5 h-[18px] w-5" fill="none" stroke="#1b1b1b" strokeWidth="1.300" aria-hidden="true">
          <path d="M1 6.500h3L9 2v14l-5-4.500H1z" />
          <path d="M11.500 6.500q1.500 2.500 0 5M14 4.500q3 4.500 0 9M16.500 2.500q4.500 6.500 0 13" />
        </svg>
        <svg viewBox="0 0 20 14" className="ml-2.5 h-3.5 w-5" aria-hidden="true">
          <rect x=".7" y=".7" width="16" height="12.600" rx="3" fill="none" stroke="#1b1b1b" strokeWidth="1.400" />
          <rect x="3" y="3" width="7" height="8" rx="1" fill="#1b1b1b" />
          <path d="M18 5q2 0 2 2t-2 2z" fill="#1b1b1b" />
        </svg>
        <time dateTime="2024-05-22T17:36" className="ml-5 text-right text-[15px] leading-5">
          17:36
          <br />
          22-05-2024
        </time>
        <svg viewBox="0 0 20 22" className="ml-2.5 h-[22px] w-5" aria-hidden="true">
          <path d="M9 2a6.500 6.500 0 0 1 6.500 6.500V14l2 3.500H1L3 14V8.500A6.500 6.500 0 0 1 9 2zM6 18.500h7q-1 2.500-3.500 2.500T6 18.500z" fill="#1b1b1b" />
          <path d="M7 8h5l-5 6h5" fill="none" stroke="#dbdbdb" strokeWidth="1.500" />
          <path d="M14 1.500h4L14 7h4.500" fill="none" stroke="#1b1b1b" strokeWidth="1.500" />
        </svg>
        <button aria-label="Copilot" className="mr-[25px] ml-5 block">
          <svg viewBox="0 0 30 30" className="size-[30px]" aria-hidden="true">
            <defs>
              <linearGradient id="coA" x2="0" y2="1">
                <stop stopColor="#1c7be0" />
                <stop offset=".5" stopColor="#2fb7a8" />
                <stop offset="1" stopColor="#f3c320" />
              </linearGradient>
              <linearGradient id="coB" x2="0" y2="1">
                <stop stopColor="#a35be8" />
                <stop offset="1" stopColor="#f7605c" />
              </linearGradient>
            </defs>
            <path d="M9 1h10q3 0 4 3l1 4h-6q-3 0-4 4l-2 7q-1 2-4 2H3q-4 0-3-5L4 5q1-4 5-4z" fill="url(#coA)" />
            <path d="M18 8h8q4 0 3 5l-3 9q-1 3-5 3h-8q3-1 4-4l2-7q1-4-1-6z" fill="url(#coB)" />
            <rect x="7" y="20" width="23" height="10" rx="2" fill="#fcc419" />
            <text x="18.500" y="28.500" fontSize="9" fontWeight="800" textAnchor="middle" fontFamily="'Open Sans', sans-serif">
              PRE
            </text>
          </svg>
        </button>
      </div>
    </footer>
  );
}

export default function App() {
  return (
    <div className="flex h-screen min-w-[1280px] flex-col overflow-hidden bg-white font-['Open_Sans','Noto_Sans',sans-serif] text-black">
      <TabStrip />
      <Toolbar />
      <div className="flex min-h-0 flex-1">
        <Sidebar />
        <main className="flex min-w-0 flex-1 flex-col bg-[linear-gradient(95deg,#c44b66,#dd5b2c)]">
          <NavBar />
          <div className="flex min-h-0 flex-1">
            <LeftColumn />
            <RightColumn />
          </div>
        </main>
        <ScrollRail thumb="h-[79px]" />
      </div>
      <Taskbar />
    </div>
  );
}
